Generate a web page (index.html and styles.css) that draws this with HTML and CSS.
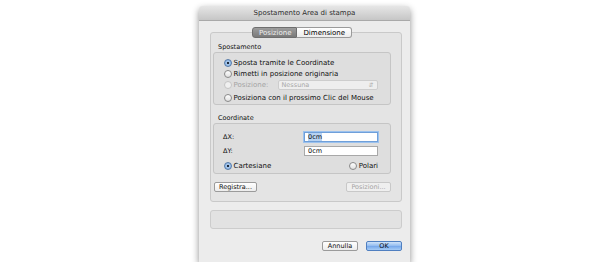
FILE: index.html
```html
<!DOCTYPE html>
<html>
<head>
<meta charset="utf-8">
<link rel="stylesheet" href="styles.css">
</head>
<body>
<div class="window">
  <div class="titlebar">Spostamento Area di stampa</div>
  <div class="tabbox">
    <div class="tabs">
      <div class="tab sel">Posizione</div>
      <div class="tab">Dimensione</div>
    </div>
    <div class="glabel l1">Spostamento</div>
    <div class="group g1">
      <div class="row r1"><span class="radio on"></span><span>Sposta tramite le Coordinate</span></div>
      <div class="row r2"><span class="radio"></span><span>Rimetti in posizione originaria</span></div>
      <div class="row r3 dis"><span class="radio dim"></span><span class="plabel">Posizione:</span>
        <div class="popup"><span>Nessuna</span><span class="arr">&#8693;</span></div>
      </div>
      <div class="row r4"><span class="radio"></span><span>Posiziona con il prossimo Clic del Mouse</span></div>
    </div>
    <div class="glabel l2">Coordinate</div>
    <div class="group g2">
      <div class="frow"><span class="flabel">&Delta;X:</span><div class="field focus"><span class="hl">0cm</span></div></div>
      <div class="frow f2"><span class="flabel">&Delta;Y:</span><div class="field">0cm</div></div>
      <div class="rrow">
        <div class="ritem"><span class="radio on"></span><span>Cartesiane</span></div>
        <div class="ritem"><span class="radio"></span><span>Polari</span></div>
      </div>
    </div>
    <div class="brow">
      <div class="btn reg">Registra...</div>
      <div class="btn pos dis">Posizioni...</div>
    </div>
  </div>
  <div class="lower"></div>
  <div class="footer">
    <div class="btn annulla">Annulla</div>
    <div class="btn ok">OK</div>
  </div>
</div>
</body>
</html>
```
FILE: styles.css
```css
html, body {
  margin: 0;
  padding: 0;
  background: #ffffff;
}
body {
  font-family: "DejaVu Sans", "Liberation Sans", sans-serif;
  font-size: 7px;
  color: #0e0e0e;
}
.window {
  width: 211px;
  height: 256px;
  margin: 6px 0 0 199px;
  background: #ececec;
  box-shadow: 0 3px 7px rgba(0,0,0,0.45);
  border-radius: 4px 4px 0 0;
  display: flex;
  flex-direction: column;
}
.titlebar {
  height: 15px;
  line-height: 15px;
  text-align: center;
  color: #2e2e2e;
  background: linear-gradient(#e6e6e6, #c6c6c6);
  border-bottom: 1px solid #a9a9a9;
  border-radius: 4px 4px 0 0;
  box-sizing: border-box;
}
.tabbox {
  margin: 11px 8px 0 11px;
  height: 170px;
  box-sizing: border-box;
  border: 1px solid #c9c9c9;
  border-radius: 3px;
  background: #e4e4e4;
  padding: 0 10px 0 2px;
  display: flex;
  flex-direction: column;
}
.tabs {
  display: flex;
  justify-content: center;
  margin: -6px 0 0 0;
  height: 11px;
}
.tab {
  height: 11px;
  line-height: 10px;
  box-sizing: border-box;
  border: 1px solid #9a9a9a;
  background: linear-gradient(#ffffff, #ececec);
  padding: 0 6px;
  color: #000;
  font-size: 7px;
}
.tab.sel {
  background: linear-gradient(#9c9c9c, #7a7a7a);
  color: #f0f0f0;
  border-color: #6e6e6e;
  border-radius: 3px 0 0 3px;
  padding: 0 5px 0 6px;
}
.tab:last-child {
  border-left: none;
  border-radius: 0 3px 3px 0;
}
.glabel {
  height: 10px;
  line-height: 10px;
  font-size: 6.5px;
  padding-left: 5px;
}
.l1 { margin-top: 4px; }
.l2 { margin-top: 8px; }
.group {
  box-sizing: border-box;
  border: 1px solid #c5c5c5;
  border-radius: 3px;
  background: #dedede;
}
.g1 {
  height: 53px;
  padding: 5px 0 0 10px;
}
.row {
  display: flex;
  align-items: center;
  height: 10.5px;
}
.r3 { height: 11px; }
.r4 { margin-top: 3px; }
.radio {
  width: 8px;
  height: 8px;
  box-sizing: border-box;
  border-radius: 50%;
  border: 1px solid #8a8a8a;
  background: linear-gradient(#ffffff, #e0e0e0);
  margin: 0 2px 0 -0.5px;
  flex: none;
}
.radio.on {
  border-color: #557aa8;
  background: radial-gradient(circle, #1d2a3a 0 1.2px, #a9c9ee 1.6px, #78a8e0 100%);
}
.radio.dim {
  border-color: #c4c4c4;
  background: #f0f0f0;
}
.dis { color: #a4a4a4; }
.plabel { width: 44px; }
.popup {
  width: 100px;
  height: 10px;
  box-sizing: border-box;
  border: 1px solid #cdcdcd;
  border-radius: 2px;
  background: #eeeeee;
  display: flex;
  justify-content: space-between;
  align-items: center;
  padding: 0 3px;
  color: #a8a8a8;
  font-size: 6.5px;
}
.arr { font-size: 6px; color: #b0b0b0; }
.g2 {
  height: 51px;
  padding: 8px 12px 0 9px;
}
.frow {
  display: flex;
  justify-content: space-between;
  align-items: center;
  height: 10px;
}
.f2 { margin-top: 4px; }
.flabel { font-size: 6.5px; }
.field {
  width: 74px;
  height: 10px;
  box-sizing: border-box;
  border: 1px solid #a8a8a8;
  background: #ffffff;
  padding: 0 3px;
  line-height: 8px;
  font-size: 6.5px;
}
.field.focus {
  border-color: #6f9fd9;
  box-shadow: 0 0 0 1px #9cc2ee;
}
.hl { background: #b7d3f3; }
.rrow {
  display: flex;
  justify-content: space-between;
  align-items: center;
  height: 10px;
  margin: 5px 0 0 1px;
}
.ritem { display: flex; align-items: center; }
.brow {
  display: flex;
  justify-content: space-between;
  margin-top: 8px;
  padding-left: 1px;
}
.btn {
  height: 10px;
  box-sizing: border-box;
  border: 1px solid #9b9b9b;
  border-radius: 2px;
  background: linear-gradient(#ffffff, #ececec);
  text-align: center;
  line-height: 8px;
  font-size: 6.5px;
}
.reg { width: 43px; }
.pos { width: 45px; border-color: #c8c8c8; background: #efefef; }
.lower {
  margin: 8px 8px 0 11px;
  height: 19px;
  box-sizing: border-box;
  border: 1px solid #cccccc;
  border-radius: 3px;
  background: #e2e2e2;
}
.footer {
  display: flex;
  justify-content: flex-end;
  gap: 8px;
  margin: 12px 8px 0 0;
}
.annulla { width: 36px; }
.ok {
  width: 36px;
  border-color: #4f7fc0;
  background: linear-gradient(#cfe3fa, #8fbaf0 50%, #74a6ea 51%, #a6ccf6);
}
```
